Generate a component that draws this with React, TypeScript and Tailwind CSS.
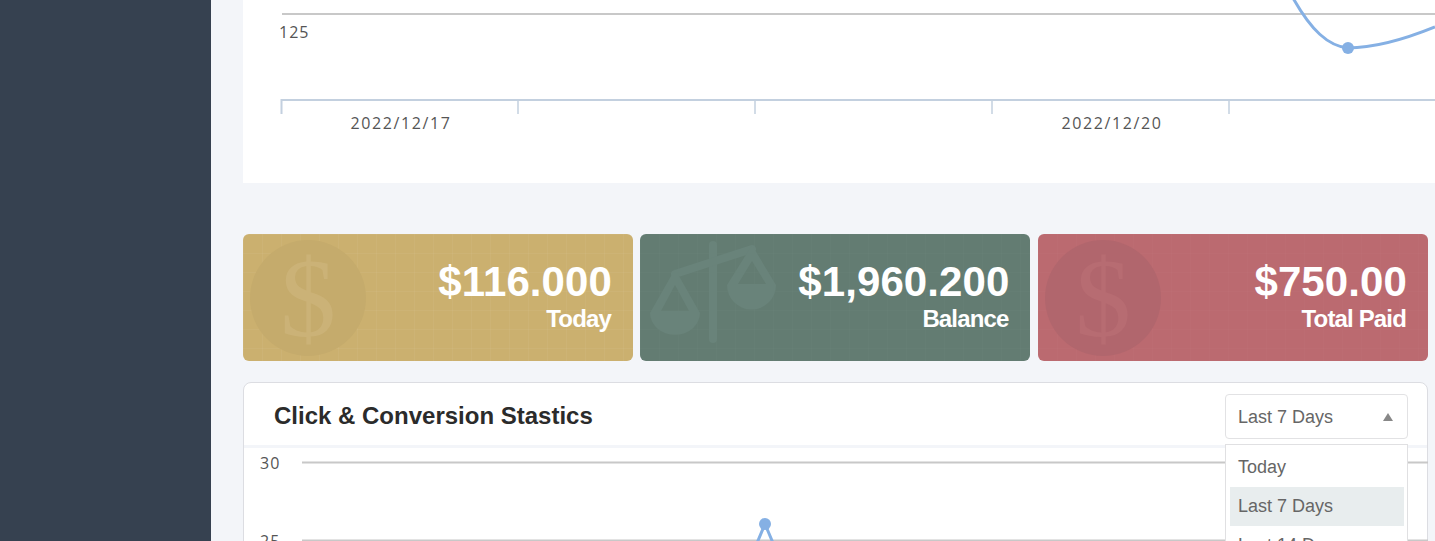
const sans = "font-['Liberation_Sans',Arial,sans-serif]";

function DollarIcon({ circle, glyph }: { circle: string; glyph: string }) {
  return (
    <svg className="absolute left-[6px] top-[5px]" width="118" height="118" viewBox="0 0 118 118">
      <circle cx="59" cy="59" r="58" fill={circle} />
      <text
        x="59"
        y="97"
        textAnchor="middle"
        fontSize="112"
        fill={glyph}
        style={{ fontFamily: "'Liberation Serif', serif" }}
      >
        $
      </text>
    </svg>
  );
}

function ScaleIcon() {
  return (
    <svg className="absolute left-[8px] top-[5px]" width="130" height="112" viewBox="0 0 130 112" fill="#69837a">
      <rect x="61" y="2" width="8" height="102" rx="4" />
      <path d="M27 35 L104 10" stroke="#69837a" strokeWidth="8" strokeLinecap="round" />
      <path fillRule="evenodd" d="M27 30 L52 74 A24 21 0 0 1 2 74 Z M27 46 L13 72 H41 Z" />
      <path fillRule="evenodd" d="M104 6 L128 46 A24 24 0 0 1 79 46 Z M104 22 L90 45 H118 Z" />
    </svg>
  );
}

const statCards = [
  {
    value: "$116.000",
    label: "Today",
    bg: "bg-[#cbb06f] bg-[linear-gradient(rgba(255,255,255,0.04)_1px,transparent_1px),linear-gradient(90deg,rgba(255,255,255,0.04)_1px,transparent_1px)] bg-[length:19px_19px]",
    icon: <DollarIcon circle="#c5ab6c" glyph="#cbb277" />,
  },
  {
    value: "$1,960.200",
    label: "Balance",
    bg: "bg-[#637c72] bg-[linear-gradient(rgba(255,255,255,0.012)_1px,transparent_1px),linear-gradient(90deg,rgba(255,255,255,0.012)_1px,transparent_1px)] bg-[length:19px_19px]",
    icon: <ScaleIcon />,
  },
  {
    value: "$750.00",
    label: "Total Paid",
    bg: "bg-[#bb6a70] bg-[linear-gradient(rgba(255,255,255,0.012)_1px,transparent_1px),linear-gradient(90deg,rgba(255,255,255,0.012)_1px,transparent_1px)] bg-[length:19px_19px]",
    icon: <DollarIcon circle="#b1666d" glyph="#b76c72" />,
  },
];

export default function App() {
  return (
    <div className={`flex h-[541px] overflow-hidden bg-[#f3f5f9] ${sans}`}>
      <aside className="w-[211px] shrink-0 bg-[#364150]" />

      <main className="min-w-0 flex-1 pl-8">
        {/* top chart */}
        <div className="h-[183px] bg-white">
          <svg width="1192" height="183" viewBox="0 0 1192 183" className="block">
            <line x1="39" y1="14" x2="1192" y2="14" stroke="#c8c8c8" strokeWidth="2" />
            <text x="36" y="38" fontSize="16" letterSpacing="1" fill="#555" style={{ fontFamily: "'Open Sans', sans-serif" }}>
              125
            </text>
            <path d="M38.5 114 V100 H1192" fill="none" stroke="#c3d0df" strokeWidth="2" />
            <line x1="275" y1="100" x2="275" y2="114" stroke="#c3d0df" strokeWidth="1.5" />
            <line x1="512" y1="100" x2="512" y2="114" stroke="#c3d0df" strokeWidth="1.5" />
            <line x1="749" y1="100" x2="749" y2="114" stroke="#c3d0df" strokeWidth="1.5" />
            <line x1="986" y1="100" x2="986" y2="114" stroke="#c3d0df" strokeWidth="1.5" />
            <text x="158" y="129" textAnchor="middle" fontSize="16" letterSpacing="1.6" fill="#555" style={{ fontFamily: "'Open Sans', sans-serif" }}>
              2022/12/17
            </text>
            <text x="869" y="129" textAnchor="middle" fontSize="16" letterSpacing="1.6" fill="#555" style={{ fontFamily: "'Open Sans', sans-serif" }}>
              2022/12/20
            </text>
            <path d="M1050 -2 C1068 30 1085 46 1105 48 C1135 48 1165 38 1192 27" fill="none" stroke="#85b0e4" strokeWidth="3" />
            <circle cx="1105" cy="48" r="6" fill="#85b0e4" />
          </svg>
        </div>

        {/* stat cards */}
        <div className="mt-[51px] grid grid-cols-[390px_390px_390px] gap-[7.49px]">
          {statCards.map((card) => (
            <div key={card.label} className={`relative h-[127px] overflow-hidden rounded-md ${card.bg}`}>
              {card.icon}
              <div className="relative pr-[22px] pt-[22px] text-right text-white">
                <div className="-mr-[1px] text-[42px] font-bold leading-[52px] tracking-[0.1px]">{card.value}</div>
                <div className="text-[24px] font-bold leading-[22px] tracking-[-0.85px]">{card.label}</div>
              </div>
            </div>
          ))}
        </div>

        {/* click chart */}
        <div className="relative mr-[7px] mt-[21px] h-[200px] rounded-t-lg border border-[#dcdde2] bg-white">
          <div className="flex h-[65px] items-start justify-between border-b-[3px] border-[#f3f5f9] pl-[30px] pr-[19px] pt-[11px]">
            <h2 className="pt-[4px] text-[24px] font-bold text-[#2b2b2b]">Click &amp; Conversion Stastics</h2>
            <div className="flex h-[45px] w-[183px] items-center justify-between rounded border border-[#e2e2e4] bg-white pl-[12px] pr-[14px] pt-[1px] text-[18px] text-[#666]">
              Last 7 Days
              <span className="h-0 w-0 border-x-[5px] border-b-[8px] border-x-transparent border-b-[#888]" />
            </div>
          </div>

          <svg width="1184" height="94" viewBox="0 0 1184 94" className="block">
            <line x1="58" y1="14.5" x2="1184" y2="14.5" stroke="#c8c8c8" strokeWidth="2" />
            <line x1="58" y1="92.5" x2="1184" y2="92.5" stroke="#c8c8c8" strokeWidth="2" />
            <text x="16" y="21" fontSize="16" letterSpacing="1" fill="#555" style={{ fontFamily: "'Open Sans', sans-serif" }}>
              30
            </text>
            <text x="16" y="99" fontSize="16" letterSpacing="1" fill="#555" style={{ fontFamily: "'Open Sans', sans-serif" }}>
              25
            </text>
            <path d="M513 95 L521 76 L529 95" fill="none" stroke="#85b0e4" strokeWidth="3" />
            <circle cx="521" cy="76" r="6" fill="#85b0e4" />
          </svg>

          <div className="absolute left-[981px] top-[61px] w-[183px] border border-[#e0e0e2] bg-white pl-[4px] pr-[3px] pt-[3px] text-[18px] text-[#666]">
            <div className="flex h-[39px] items-center pl-[8px]">Today</div>
            <div className="flex h-[39px] items-center bg-[#e8edee] pl-[8px]">Last 7 Days</div>
            <div className="flex h-[39px] items-center pl-[8px]">Last 14 Days</div>
          </div>
        </div>
      </main>
    </div>
  );
}
